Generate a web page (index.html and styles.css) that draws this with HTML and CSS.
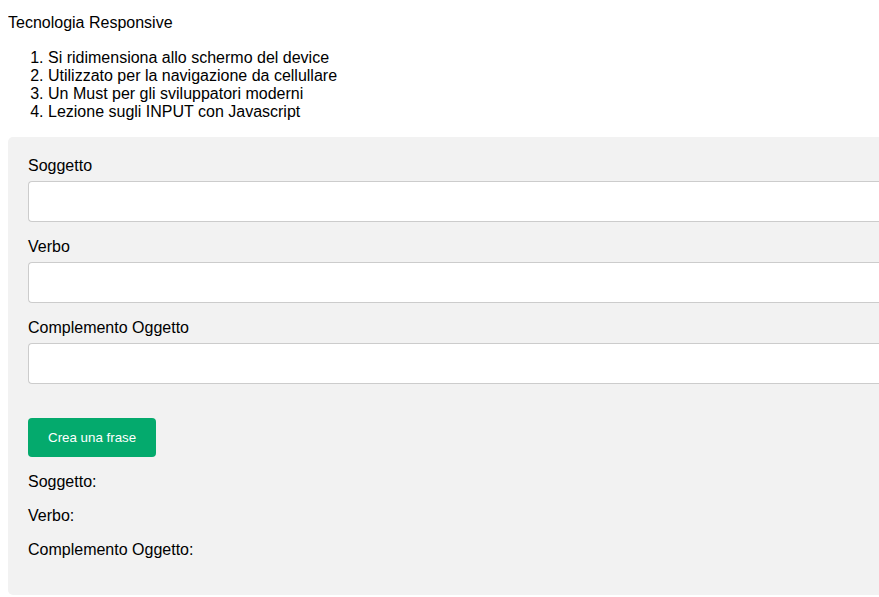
FILE: index.html
```html
<!DOCTYPE html>
<html lang="it">
<head>
<meta charset="utf-8">
<title>Tecnologia Responsive</title>
<link rel="stylesheet" href="styles.css">
</head>
<body>
<div class="title">Tecnologia Responsive</div>
<ol class="features">
  <li>Si ridimensiona allo schermo del device</li>
  <li>Utilizzato per la navigazione da cellullare</li>
  <li>Un Must per gli sviluppatori moderni</li>
  <li>Lezione sugli INPUT con Javascript</li>
</ol>
<form class="panel">
  <label class="field-label" for="soggetto">Soggetto</label>
  <input class="field-input" id="soggetto" type="text">
  <label class="field-label" for="verbo">Verbo</label>
  <input class="field-input" id="verbo" type="text">
  <label class="field-label" for="complemento">Complemento Oggetto</label>
  <input class="field-input" id="complemento" type="text">
  <button class="submit" type="button">Crea una frase</button>
  <p class="result">Soggetto:</p>
  <p class="result">Verbo:</p>
  <p class="result">Complemento Oggetto:</p>
</form>
</body>
</html>
```
FILE: styles.css
```css
body {
  margin: 8px 0 0 8px;
  font-family: "Liberation Sans", Arial, sans-serif;
  font-size: 16px;
  color: #000;
  background: #fff;
}

.title {
  margin-top: 6px;
  line-height: 18px;
}

.features {
  margin: 17px 0 16px;
  padding-left: 40px;
  line-height: 18px;
}

.panel {
  box-sizing: border-box;
  display: flex;
  flex-direction: column;
  width: 100%;
  padding: 20px 0 20px 20px;
  background: #f2f2f2;
  border-radius: 5px 0 0 5px;
}

.field-label {
  line-height: 18px;
  margin-bottom: 6px;
}

.field-input {
  box-sizing: border-box;
  width: 100%;
  height: 41px;
  margin: 0 0 16px;
  padding: 0 20px;
  border: 1px solid #ccc;
  border-right: none;
  border-radius: 4px 0 0 4px;
  background: #fff;
  font: inherit;
}

.submit {
  align-self: flex-start;
  margin-top: 18px;
  padding: 12px 20px;
  height: 39px;
  border: none;
  border-radius: 4px;
  background: #04aa6d;
  color: #fff;
  font-family: "Liberation Sans", Arial, sans-serif;
  font-size: 13.333px;
  line-height: 15px;
}

.result {
  margin: 16px 0;
  line-height: 18px;
}

.result + .result {
  margin-top: 0;
}
```
